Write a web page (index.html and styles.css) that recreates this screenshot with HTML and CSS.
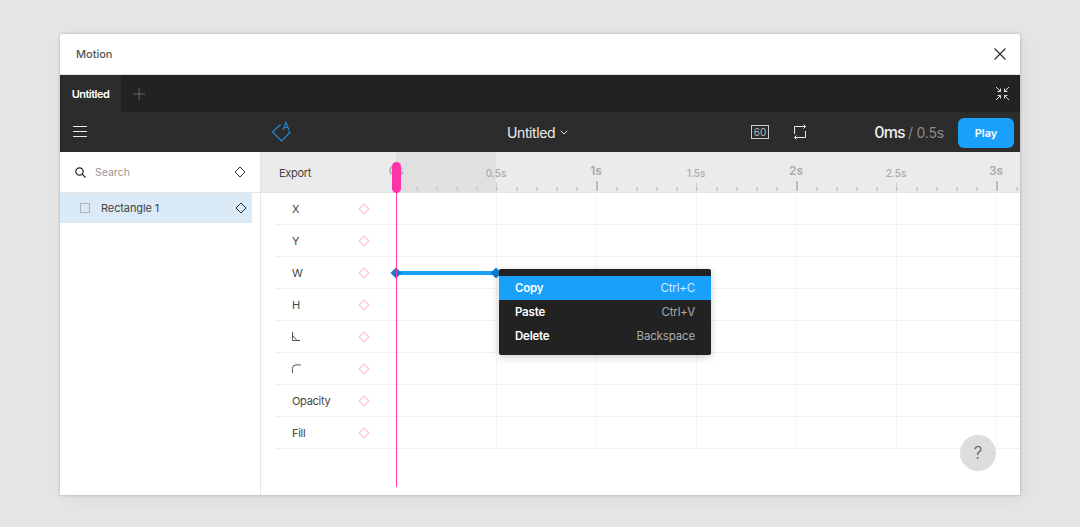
FILE: index.html
```html
<!DOCTYPE html>
<html lang="en">
<head>
<meta charset="utf-8">
<title>Motion</title>
<link rel="stylesheet" href="styles.css">
</head>
<body>
<div class="window">
  <header class="titlebar">
    <span class="title">Motion</span>
    <svg class="close" width="14" height="14" viewBox="0 0 14 14"><path d="M1.5 1.500l11 11M12.500 1.500l-11 11" stroke="#222" stroke-width="1.100" fill="none"/></svg>
  </header>
  <div class="tabbar">
    <div class="tab">Untitled</div>
    <svg class="plus" width="12" height="12" viewBox="0 0 12 12"><path d="M6 0v12M0 6h12" stroke="#666" stroke-width="1" fill="none"/></svg>
    <svg class="collapse" width="15" height="15" viewBox="0 0 15 15" fill="none" stroke="#ddd" stroke-width="1"><path d="M1 1l4.500 4.500M5.500 2.500v3h-3M14 1L9.500 5.500M9.500 2.500v3h3M1 14l4.500-4.500M5.500 12.500v-3h-3M14 14L9.500 9.500M9.500 12.500v-3h3"/></svg>
  </div>
  <div class="toolbar">
    <svg class="menu-icon" width="14" height="11" viewBox="0 0 14 11"><path d="M0 .5h14M0 5.500h14M0 10.500h14" stroke="#e8e8e8" stroke-width="1" fill="none"/></svg>
    <svg class="logo" width="20" height="20" viewBox="0 0 20 20" fill="none" stroke="#1b8fdc" stroke-width="1.100"><path d="M9.500 3.500L1.500 11l9 9 8.500-8.500-1.500-1.500"/><path d="M12 9l3-7.500L18 9M13 6.500h4"/></svg>
    <div class="doc-name">Untitled<svg width="8" height="5" viewBox="0 0 8 5"><path d="M.7.700L4 4l3.300-3.300" stroke="#ddd" stroke-width="1" fill="none"/></svg></div>
    <div class="fps">60</div>
    <svg class="loop" width="13" height="16" viewBox="0 0 13 16" fill="none" stroke="#e8e8e8" stroke-width="1"><path d="M.5 10V2.500H12M9.500.5l2 2-2 2M11.500 7v6.500H.5M2.500 11.500l-2 2 2 2"/></svg>
    <div class="time"><span class="time-now">0ms</span> <span class="time-total">/ 0.5s</span></div>
    <button class="play">Play</button>
  </div>
  <div class="main">
    <aside class="sidebar">
      <div class="search">
        <svg width="11" height="11" viewBox="0 0 11 11" fill="none" stroke="#222" stroke-width="1.200"><circle cx="4.500" cy="4.500" r="3.700"/><path d="M7.200 7.200l3.300 3.300"/></svg>
        <span class="search-label">Search</span>
        <svg class="diamond" width="12" height="12" viewBox="0 0 12 12"><path d="M6 1l5 5-5 5-5-5z" fill="none" stroke="#333" stroke-width="1"/></svg>
      </div>
      <div class="layer">
        <span class="layer-box"></span>
        <span class="layer-name">Rectangle 1</span>
        <svg class="diamond" width="12" height="12" viewBox="0 0 12 12"><path d="M6 1l5 5-5 5-5-5z" fill="none" stroke="#333" stroke-width="1"/></svg>
      </div>
    </aside>
    <section class="timeline">
      <div class="ruler">
        <span class="export">Export</span>
        <div class="range"></div>
        <div class="ticks"></div>
        <span class="mark big m0">0s</span>
        <span class="mark small m1">0.5s</span>
        <span class="mark big m2">1s</span>
        <span class="mark small m3">1.5s</span>
        <span class="mark big m4">2s</span>
        <span class="mark small m5">2.5s</span>
        <span class="mark big m6">3s</span>
      </div>
      <div class="grid"></div>
      <div class="rows">
        <div class="row"><span class="prop">X</span><svg class="kf" width="12" height="12" viewBox="0 0 12 12"><path d="M6 1l5 5-5 5-5-5z"/></svg></div>
        <div class="row"><span class="prop">Y</span><svg class="kf" width="12" height="12" viewBox="0 0 12 12"><path d="M6 1l5 5-5 5-5-5z"/></svg></div>
        <div class="row"><span class="prop">W</span><svg class="kf" width="12" height="12" viewBox="0 0 12 12"><path d="M6 1l5 5-5 5-5-5z"/></svg></div>
        <div class="row"><span class="prop">H</span><svg class="kf" width="12" height="12" viewBox="0 0 12 12"><path d="M6 1l5 5-5 5-5-5z"/></svg></div>
        <div class="row"><span class="prop"><svg class="prop-icon" width="9" height="9" viewBox="0 0 9 9" fill="none" stroke="#555" stroke-width="1"><path d="M.5 0v8.500H8M.5 3.500L5 8.500"/></svg></span><svg class="kf" width="12" height="12" viewBox="0 0 12 12"><path d="M6 1l5 5-5 5-5-5z"/></svg></div>
        <div class="row"><span class="prop"><svg class="prop-icon" width="10" height="10" viewBox="0 0 10 10" fill="none" stroke="#555" stroke-width="1"><path d="M.5 9V4.500Q.5 1 4 .9H9"/></svg></span><svg class="kf" width="12" height="12" viewBox="0 0 12 12"><path d="M6 1l5 5-5 5-5-5z"/></svg></div>
        <div class="row"><span class="prop">Opacity</span><svg class="kf" width="12" height="12" viewBox="0 0 12 12"><path d="M6 1l5 5-5 5-5-5z"/></svg></div>
        <div class="row"><span class="prop">Fill</span><svg class="kf" width="12" height="12" viewBox="0 0 12 12"><path d="M6 1l5 5-5 5-5-5z"/></svg></div>
      </div>
      <div class="track"><svg class="key key-a" width="12" height="12" viewBox="0 0 12 12"><path d="M6 .5L11.500 6 6 11.500.5 6z"/></svg><svg class="key key-b" width="12" height="12" viewBox="0 0 12 12"><path d="M6 .5L11.500 6 6 11.500.5 6z"/></svg></div>
      <div class="playhead"></div>
      <div class="handle"></div>
      <div class="context">
        <div class="item active"><span class="item-name">Copy</span><span class="item-key">Ctrl+C</span></div>
        <div class="item"><span class="item-name">Paste</span><span class="item-key">Ctrl+V</span></div>
        <div class="item"><span class="item-name">Delete</span><span class="item-key">Backspace</span></div>
      </div>
      <div class="help">?</div>
    </section>
  </div>
</div>
</body>
</html>
```

FILE: styles.css
```css
* { box-sizing: border-box; }
html, body { margin: 0; height: 100%; }
body {
  background: #e5e5e5;
  padding: 34px 60px 0;
  font-family: Inter, "Liberation Sans", sans-serif;
  font-size: 11px;
  color: #333;
  overflow: hidden;
}
.window {
  width: 960px;
  height: 461px;
  background: #fff;
  display: flex;
  flex-direction: column;
  box-shadow: 0 0 3px rgba(0,0,0,.25), 4px 4px 16px rgba(0,0,0,.05);
  border-radius: 2px 2px 0 0;
}
.titlebar {
  height: 41px;
  flex: none;
  display: flex;
  align-items: center;
  justify-content: space-between;
  padding: 0 13px 1px 16px;
  border-bottom: 1px solid #e5e5e5;
}
.title { font-size: 11px; font-weight: 500; color: #555; }
.close { display: block; }
.tabbar {
  height: 37px;
  flex: none;
  background: #222;
  display: flex;
  align-items: center;
}
.tab {
  width: 61px;
  height: 100%;
  background: #2c2c2c;
  color: #fff;
  font-size: 11px;
  font-weight: 600;
  letter-spacing: -.5px;
  display: flex;
  align-items: center;
  justify-content: center;
}
.plus { margin-left: 12px; }
.collapse { margin-left: auto; margin-right: 10px; margin-top: -1px; }
.toolbar {
  height: 40px;
  flex: none;
  background: #2c2c2c;
  display: flex;
  align-items: center;
  padding: 0 6px 0 13px;
  color: #fff;
}
.menu-icon { flex: none; margin-top: -1px; }
.logo { flex: none; margin-left: 184px; margin-top: -2px; overflow: visible; }
.doc-name {
  margin-left: 216px;
  font-size: 14px;
  font-weight: 400;
  letter-spacing: -.4px;
  color: #eee;
  display: flex;
  align-items: center;
  gap: 5px;
  width: 244px;
}
.fps {
  width: 18px;
  height: 14px;
  border: 1px solid #ccc;
  font-size: 10px;
  line-height: 12px;
  text-align: center;
  color: #bbb;
}
.loop { margin-left: 25px; flex: none; }
.time { margin-left: auto; white-space: nowrap; margin-right: 14px; }
.time-now { font-size: 16px; font-weight: 500; color: #eee; letter-spacing: -.8px; }
.time-total { font-size: 14px; color: #8a8a8a; letter-spacing: -.2px; }
.play {
  width: 56px;
  height: 30px;
  margin-top: 2px;
  border: 0;
  border-radius: 6px;
  background: #18a0fb;
  color: #fff;
  font: 600 11px Inter, "Liberation Sans", sans-serif;
  padding: 0;
}
.main { flex: 1; display: flex; min-height: 0; }
.sidebar { width: 201px; flex: none; border-right: 1px solid #e5e5e5; }
.search {
  height: 41px;
  border-bottom: 1px solid #e5e5e5;
  display: flex;
  align-items: center;
  padding: 0 14px 0 15px;
}
.search-label { margin-left: 9px; color: #999; font-size: 10.5px; }
.diamond { margin-left: auto; display: block; }
.layer {
  width: 192px;
  height: 30px;
  background: #daeaf7;
  display: flex;
  align-items: center;
  padding: 0 5px 0 20px;
}
.layer-box { width: 10px; height: 10px; border: 1px solid #b3b3b3; }
.layer-name { margin-left: 11px; font-size: 11px; color: #444; letter-spacing: -.1px; }
.timeline { flex: 1; position: relative; min-width: 0; overflow: hidden; }
.ruler {
  height: 41px;
  background: #ebebeb;
  border-bottom: 1px solid #e5e5e5;
  position: relative;
  display: flex;
  align-items: center;
  padding: 1px 0 0 18px;
}
.export { font-size: 11px; color: #444; letter-spacing: -.3px; }
.range { position: absolute; left: 135px; top: 0; width: 100px; height: 40px; background: #e0e0e0; }
.ticks {
  position: absolute;
  left: 135px;
  right: 0;
  bottom: 1px;
  height: 10px;
  background-image:
    repeating-linear-gradient(90deg, #bdbdbd 0 2px, transparent 2px 200px),
    repeating-linear-gradient(90deg, #c8c8c8 0 1px, transparent 1px 100px),
    repeating-linear-gradient(90deg, #d0d0d0 0 2px, transparent 2px 20px);
  background-size: 100% 10px, 100% 8px, 100% 4px;
  background-position: 0 100%;
  background-repeat: no-repeat;
}
.mark { position: absolute; color: #aaa; transform: translateX(-50%); white-space: nowrap; }
.mark.big { top: 11px; font-size: 12px; font-weight: 600; }
.mark.small { top: 15px; font-size: 10px; font-weight: 500; }
.m0 { left: 135px; }
.m1 { left: 235px; }
.m2 { left: 335px; }
.m3 { left: 435px; }
.m4 { left: 535px; }
.m5 { left: 635px; }
.m6 { left: 735px; }
.grid {
  position: absolute;
  left: 235px;
  right: 0;
  top: 41px;
  height: 256px;
  background-image: repeating-linear-gradient(90deg, #f5f5f5 0 1px, transparent 1px 100px);
}
.rows { margin-left: 15px; }
.row {
  height: 32px;
  border-bottom: 1px solid #f0f0f0;
  display: flex;
  align-items: center;
  padding: 0 0 0 16px;
}
.prop { width: 66px; font-size: 11px; color: #444; display: flex; align-items: center; letter-spacing: -.3px; }
.prop-icon { display: block; }
.kf { flex: none; }
.kf path { fill: none; stroke: #ffc4e6; stroke-width: 1.2; }
.track {
  position: absolute;
  left: 135px;
  top: 119px;
  width: 100px;
  height: 4px;
  background: #18a0fb;
}
.key { position: absolute; top: -4px; }
.key path { fill: #0d7fd0; }
.key-a { left: -6px; }
.key-b { right: -6px; }
.playhead { position: absolute; left: 135px; top: 40px; bottom: 8px; width: 1px; background: #ff33a8; }
.handle { position: absolute; left: 131px; top: 10px; width: 9px; height: 31px; border-radius: 5px; background: #ff33a8; }
.context {
  position: absolute;
  left: 238px;
  top: 117px;
  width: 212px;
  background: #222;
  border-radius: 2px;
  padding: 7px 0;
  box-shadow: 0 2px 8px rgba(0,0,0,.2);
}
.item {
  height: 24px;
  display: flex;
  align-items: center;
  justify-content: space-between;
  padding: 0 16px;
  font-size: 11.5px;
  color: #fff;
}
.item-name { font-weight: 600; letter-spacing: -.2px; }
.item-key { color: #aaa; letter-spacing: -.15px; }
.item.active { background: #18a0fb; }
.item.active .item-key { color: #d5ecff; }
.help {
  position: absolute;
  left: 699px;
  top: 283px;
  width: 36px;
  height: 36px;
  border-radius: 50%;
  background: #ddd;
  color: #555;
  font-size: 17px;
  font-weight: 300;
  display: flex;
  align-items: center;
  justify-content: center;
}
```
